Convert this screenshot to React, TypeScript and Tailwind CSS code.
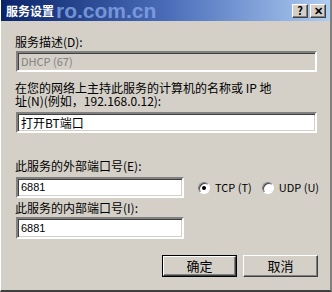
import React from 'react';

const sunken =
  'bg-white border-2 border-t-[#808080] border-l-[#808080] border-b-white border-r-white shadow-[inset_1px_1px_0_#404040,inset_-1px_-1px_0_#d4d0c8]';

const raised =
  'bg-[#d4d0c8] border border-t-white border-l-white border-b-[#404040] border-r-[#404040] shadow-[inset_-1px_-1px_0_#808080]';

const TitleButton = ({ children }: { children: React.ReactNode }) => (
  <div className={`w-[16px] h-[14px] ${raised} flex items-center justify-center text-[11px] font-bold leading-none text-black`}>
    {children}
  </div>
);

const Radio = ({ checked }: { checked?: boolean }) => (
  <div className="w-[12px] h-[12px] rounded-full bg-white border border-t-[#808080] border-l-[#808080] border-b-white border-r-white shadow-[inset_1px_1px_0_#404040] flex items-center justify-center">
    {checked && <div className="w-[4px] h-[4px] rounded-full bg-black" />}
  </div>
);

const Button = ({ label, isDefault }: { label: string; isDefault?: boolean }) => (
  <div
    className={`w-[75px] h-[22px] flex items-center justify-center text-[13px] text-black ${
      isDefault ? 'border border-black' : ''
    }`}
  >
    <div className={`w-full h-full flex items-center justify-center ${raised}`}>{label}</div>
  </div>
);

export default function App() {
  return (
    <div
      className="relative w-[332px] h-[292px] bg-[#d4d0c8] border-b-2 border-r-2 border-b-[#404040] border-r-[#808080] border-l border-l-white overflow-hidden text-[12px] text-black"
      style={{ fontFamily: '"Noto Sans CJK SC", "Liberation Sans", sans-serif' }}
    >
      {/* title bar, with the site watermark behind it */}
      <div className="relative h-[21px] bg-gradient-to-r from-[#0a246a] via-[#4a6cb8] to-[#b0cdf2] flex items-center overflow-hidden">
        <span className="absolute left-[55px] top-0 text-[21px] font-bold leading-[21px] text-[#88a8e8]/80 select-none" style={{ fontFamily: '"Liberation Sans", sans-serif' }}>
          ro.com.cn
        </span>
        <span className="relative ml-[5px] text-white font-bold text-[12px] leading-none">服务设置</span>
        <div className="relative ml-auto mr-[4px] flex gap-[2px]">
          <TitleButton>?</TitleButton>
          <TitleButton>✕</TitleButton>
        </div>
      </div>

      <div className="flex flex-col pl-[14px]">
        <div className="mt-[15px] leading-[12px]">服务描述(D):</div>
        <div className={`mt-[3px] ml-px w-[301px] h-[21px] ${sunken} !bg-[#d4d0c8] flex items-center pl-[3px] text-[#808080] text-[11px]`}>
          DHCP (67)
        </div>

        <div className="mt-[9px] leading-[13px] h-[13px]">在您的网络上主持此服务的计算机的名称或 IP 地</div>
        <div className="leading-[13px] h-[13px]">址(N)(例如，192.168.0.12):</div>
        <div className={`mt-[5px] ml-px w-[301px] h-[21px] ${sunken} flex items-center pl-[3px]`}>打开BT端口</div>

        <div className="mt-[27px] leading-[12px]">此服务的外部端口号(E):</div>
        <div className="mt-[5px] ml-px flex items-center">
          <div className={`w-[168px] h-[21px] ${sunken} flex items-center pl-[3px] text-[11px]`} style={{ fontFamily: '"Liberation Sans", sans-serif' }}>
            6881
          </div>
          <div className="ml-[14px] flex items-center gap-[5px]">
            <Radio checked />
            <span className="text-[11px]">TCP (T)</span>
          </div>
          <div className="ml-[10px] flex items-center gap-[5px]">
            <Radio />
            <span className="text-[11px]">UDP (U)</span>
          </div>
        </div>

        <div className="mt-[4px] leading-[12px]">此服务的内部端口号(I):</div>
        <div className={`mt-[3px] ml-px w-[168px] h-[22px] ${sunken} flex items-center pl-[3px] text-[11px]`} style={{ fontFamily: '"Liberation Sans", sans-serif' }}>
          6881
        </div>

        <div className="mt-[16px] ml-[147px] flex gap-[6px]">
          <Button label="确定" isDefault />
          <Button label="取消" />
        </div>
      </div>
    </div>
  );
}
